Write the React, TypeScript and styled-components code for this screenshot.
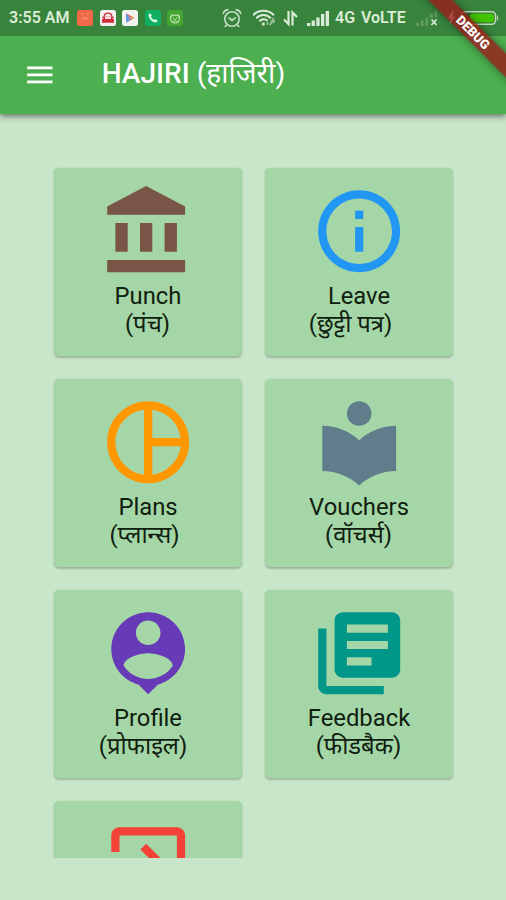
import React from "react";
import styled, { createGlobalStyle } from "styled-components";

const GlobalStyle = createGlobalStyle`
  *, *::before, *::after { box-sizing: border-box; }
  html, body { margin: 0; padding: 0; background: #c8e6c9; }
  body { font-family: Roboto, "Noto Sans", "Noto Sans Devanagari", sans-serif; }
  svg { display: block; flex: none; }
`;

const Screen = styled.div`
  position: relative;
  display: flex;
  flex-direction: column;
  width: 506px;
  height: 900px;
  overflow: hidden;
  background: #c8e6c9;
`;

const Header = styled.header`
  position: relative;
  z-index: 1;
  flex: none;
  height: 114px;
  background: #4caf50;
  box-shadow: 0 2px 5px rgba(0, 0, 0, 0.4), 0 4px 8px rgba(0, 0, 0, 0.12);
`;

const StatusBar = styled.div`
  display: flex;
  align-items: center;
  height: 36px;
  padding: 0 7px 0 9px;
  background: #39843c;
  color: #dcecd9;
  font-size: 16px;
  font-weight: 600;
  line-height: 38px;
  white-space: nowrap;
`;

const Clock = styled.span`
  width: 68px;
`;

const AppBadges = styled.div`
  display: flex;
  gap: 6.5px;
  width: 145px;
`;

const StatusSlot = styled.span<{ $w: number }>`
  flex: none;
  width: ${(p) => p.$w}px;
`;

const AppBar = styled.div`
  display: flex;
  align-items: center;
  height: 78px;
  padding-left: 23px;
`;

const Title = styled.h1`
  margin: 0 0 2px 45px;
  color: #fff;
  font-size: 28.1px;
  font-weight: 500;
  line-height: 34px;
  white-space: nowrap;
`;

const TitleHindi = styled.span`
  font-weight: 400;
`;

const RibbonCorner = styled.div`
  position: absolute;
  z-index: 2;
  top: 0;
  right: 0;
  width: 90px;
  height: 90px;
  overflow: hidden;
`;

const Ribbon = styled.div`
  position: absolute;
  top: 24px;
  left: -13px;
  width: 140px;
  height: 17px;
  transform: rotate(45deg);
  background: rgba(156, 24, 24, 0.78);
  box-shadow: 0 0 8px rgba(0, 0, 0, 0.45);
  color: #fff;
  font-size: 12.9px;
  font-weight: 900;
  line-height: 17px;
  text-align: center;
`;

const Content = styled.main`
  height: 744px;
  padding: 54px 53px 0 54px;
  overflow: hidden;
`;

const Grid = styled.div`
  display: grid;
  grid-template-columns: 188px 188px;
  grid-auto-rows: 188px;
  gap: 23px;
`;

const Card = styled.section`
  display: flex;
  flex-direction: column;
  align-items: center;
  padding-top: 14px;
  border-radius: 5px;
  background: #a5d6a7;
  box-shadow: 0 1.5px 2px rgba(0, 0, 0, 0.2), 0 0 2px rgba(0, 0, 0, 0.08);
`;

const Labels = styled.div`
  display: flex;
  flex-direction: column;
  align-items: center;
  padding-top: 1.5px;
`;

const Label = styled.div`
  height: 28px;
  color: #10200f;
  font-size: 23.8px;
  line-height: 28px;
  white-space: nowrap;
`;

const HindiLabel = styled(Label)<{ $trail: number }>`
  padding-right: ${(p) => p.$trail}px;
`;

const icons = {
  bank: "M4 10v7h3v-7H4zm6 0v7h3v-7h-3zM2 22h19v-3H2v3zm14-12v7h3v-7h-3zm-4.5-9L2 6v2h19V6l-9.5-5z",
  info: "M11 17h2v-6h-2v6zm1-15C6.48 2 2 6.48 2 12s4.48 10 10 10 10-4.48 10-10S17.52 2 12 2zm0 18c-4.41 0-8-3.59-8-8s3.59-8 8-8 8 3.59 8 8-3.59 8-8 8zM11 9h2V7h-2v2z",
  pie: "M12 2C6.48 2 2 6.48 2 12s4.48 10 10 10 10-4.48 10-10S17.52 2 12 2zm1 2.07c3.61.45 6.48 3.33 6.93 6.93H13V4.07zM4 12c0-4.06 3.07-7.44 7-7.93v15.87c-3.93-.5-7-3.88-7-7.94zm9 7.93V13h6.93c-.45 3.61-3.32 6.48-6.93 6.93z",
  reader: "M12 11.55C9.64 9.35 6.48 8 3 8v11c3.48 0 6.64 1.35 9 3.55 2.36-2.19 5.52-3.55 9-3.55V8c-3.48 0-6.64 1.35-9 3.55zM12 8c1.66 0 3-1.34 3-3s-1.34-3-3-3-3 1.34-3 3 1.34 3 3 3z",
  person: "M12 2C7.03 2 3 6.03 3 11c0 4.17 2.84 7.67 6.69 8.69L12 22l2.31-2.31C18.16 18.67 21 15.17 21 11c0-4.97-4.03-9-9-9zm0 2c1.66 0 3 1.34 3 3s-1.34 3-3 3-3-1.34-3-3 1.34-3 3-3zm0 14.3c-2.5 0-4.71-1.28-6-3.22.03-1.99 4-3.08 6-3.08 1.99 0 5.97 1.09 6 3.08-1.29 1.94-3.5 3.22-6 3.22z",
  books: "M4 6H2v14c0 1.1.9 2 2 2h14v-2H4V6zm16-4H8c-1.1 0-2 .9-2 2v12c0 1.1.9 2 2 2h12c1.1 0 2-.9 2-2V4c0-1.1-.9-2-2-2zm-1 9H9V9h10v2zm-4 4H9v-2h6v2zm4-8H9V5h10v2z",
  exit: "M10.09 15.59L11.5 17l5-5-5-5-1.41 1.41L12.67 11H3v2h9.67l-2.58 2.59zM19 3H5c-1.11 0-2 .9-2 2v4h2V5h14v14H5v-4H3v4c0 1.1.89 2 2 2h14c1.1 0 2-.9 2-2V5c0-1.1-.9-2-2-2z",
  menu: "M3 18h18v-2H3v2zm0-5h18v-2H3v2zm0-7v2h18V6H3z",
};

interface Item {
  icon: keyof typeof icons;
  color: string;
  label?: string;
  hindi?: string;
  trail?: number;
}

const items: Item[] = [
  { icon: "bank", color: "#795548", label: "Punch", hindi: "(पंच)", trail: 1 },
  { icon: "info", color: "#2196f3", label: "Leave", hindi: "(छुट्टी पत्र)", trail: 17 },
  { icon: "pie", color: "#ff9800", label: "Plans", hindi: "(प्लान्स)", trail: 7 },
  { icon: "reader", color: "#607d8b", label: "Vouchers", hindi: "(वॉचर्स)", trail: 1 },
  { icon: "person", color: "#673ab7", label: "Profile", hindi: "(प्रोफाइल)", trail: 10 },
  { icon: "books", color: "#009688", label: "Feedback", hindi: "(फीडबैक)", trail: 1 },
  { icon: "exit", color: "#f44336" },
];

const MaterialIcon = ({ d, size, color }: { d: string; size: number; color: string }) => (
  <svg width={size} height={size} viewBox="0 0 24 24" fill={color}>
    <path d={d} />
  </svg>
);

const Badges = () => (
  <AppBadges>
    <svg width="16" height="16" viewBox="0 0 16 16">
      <rect width="16" height="16" rx="2.5" fill="#f2694a" />
      <path d="M4.5 3.2l1.3 1M11.5 3.2l-1.3 1M5.5 9l2-1M10.5 9l-2-1" stroke="#fbc3a8" strokeWidth="1" fill="none" />
    </svg>
    <svg width="16" height="16" viewBox="0 0 16 16">
      <rect width="16" height="16" rx="2.5" fill="#f5eeee" />
      <path d="M4.3 6.5C4.3 2 11.7 2 11.7 6.5" stroke="#c9343c" strokeWidth="1.4" fill="none" />
      <path d="M2 6.5h12L12.5 9H14v3.8H2V9h1.5z" fill="#cf2f3b" />
      <rect x="5" y="6.5" width="6" height="2.5" fill="#f8dede" />
    </svg>
    <svg width="16" height="16" viewBox="0 0 16 16">
      <rect width="16" height="16" rx="2.5" fill="#f0f3ee" />
      <path d="M4 3v10l4-5z" fill="#5b9ce0" />
      <path d="M4 3l8.5 5H8z" fill="#e46478" />
      <path d="M4 13l8.5-5H8z" fill="#9a82b8" />
      <path d="M8 8l2-1.6L12.7 8 10 9.6z" fill="#eda455" />
    </svg>
    <svg width="16" height="16" viewBox="0 0 16 16">
      <rect width="16" height="16" rx="2.5" fill="#0fae62" />
      <path d="M3.6 4.2l1.5-1 1.7 2.4-1 1.1c.8 1.5 1.8 2.4 3.3 3.2l1.1-1 2.3 1.6-1 1.7c-3.8.9-8.3-4-7.9-8z" fill="#e8fff2" />
    </svg>
    <svg width="16" height="16" viewBox="0 0 16 16">
      <rect width="16" height="16" rx="2.5" fill="#43a52f" />
      <path d="M4 4l1 1.5M12 4l-1 1.5M3.5 7c1-2.5 8-2.5 9 0l-.8 4.5c-2 2-5.4 2-7.4 0z" stroke="#b9dfa8" strokeWidth="1.2" fill="none" />
      <path d="M6 7.5l2 2.3 2.5-2.5M6 11h4" stroke="#b9dfa8" strokeWidth="1" fill="none" />
    </svg>
  </AppBadges>
);

const AlarmIcon = () => (
  <svg width="20" height="20" viewBox="0 0 20 20" fill="none" stroke="#c9dfc8" strokeWidth="1.6" strokeLinecap="round">
    <circle cx="10" cy="11" r="7.2" />
    <path d="M1.3 5.2A6 6 0 0 1 5.8 1.6M18.7 5.2a6 6 0 0 0-4.5-3.6M7 9.8l3 2.6 3.2-2.6M4.6 17l-1.4 1.5M15.4 17l1.4 1.5" />
  </svg>
);

const WifiIcon = () => (
  <svg width="24" height="20" viewBox="0 0 24 20" fill="none" stroke="#dcebda" strokeWidth="2">
    <path d="M0 7.2C5.500 1.2 15.500 1.2 21 7.2" />
    <path d="M3.2 10.3c4-4.4 10.6-4.4 14.6 0" />
    <path d="M6.4 13.2c2.4-2.6 6-2.6 8.3-.3" />
    <circle cx="10.3" cy="16" r="1.6" fill="#dcebda" stroke="none" />
    <path d="M14.500 17v-3M17 17l3.5-7M20 15l1.7-3" stroke="#98bd96" strokeWidth="1.8" />
  </svg>
);

const TransferIcon = () => (
  <svg width="16" height="18" viewBox="0 0 16 18" fill="none" stroke="#dcebda" strokeWidth="2.2">
    <path d="M5.500 2v13L1 10.500M9.500 16.500v-13L14 8" />
  </svg>
);

const SignalIcon = () => (
  <svg width="23" height="16" viewBox="0 0 23 16" fill="#dcebda">
    <rect x="0" y="13" width="3.300" height="3" />
    <rect x="4.600" y="10.500" width="3.300" height="5.500" />
    <rect x="9.300" y="7.500" width="3.300" height="8.500" />
    <rect x="14" y="4" width="3.300" height="12" />
    <rect x="18.700" y="1" width="3.300" height="15" />
  </svg>
);

const NoSignalIcon = () => (
  <svg width="22" height="16" viewBox="0 0 22 16">
    <path d="M0 13h3v3H0zM4.600 10.500h3V16h-3zM9.300 7.500h3V16h-3zM14 4h3v4h-3zM18.700 1h2.500v6h-2.500z" fill="#5e9b5f" />
    <path d="M15.500 9.500l5 5.500M20.500 9.500l-5 5.500" stroke="#dcebda" strokeWidth="1.700" />
  </svg>
);

const BatteryIcon = () => (
  <svg width="52" height="16" viewBox="0 0 52 16">
    <path d="M5.500 1L1 8.300h3L2.500 14 8 6.500H4.800L7 2z" fill="#fff" />
    <rect x="14" y="1.700" width="34.500" height="12.600" rx="4" fill="#2c6b30" stroke="#c3dcc0" strokeWidth="1.600" />
    <rect x="23" y="3.500" width="24" height="9" rx="2.500" fill="#42c404" />
    <path d="M50 5q2.500 3 0 6z" fill="#c3dcc0" />
  </svg>
);

export default function App() {
  return (
    <Screen>
      <GlobalStyle />
      <Header>
        <StatusBar>
          <Clock>3:55 AM</Clock>
          <Badges />
          <StatusSlot $w={31}><AlarmIcon /></StatusSlot>
          <StatusSlot $w={30}><WifiIcon /></StatusSlot>
          <StatusSlot $w={24}><TransferIcon /></StatusSlot>
          <StatusSlot $w={28}><SignalIcon /></StatusSlot>
          <StatusSlot $w={26}>4G</StatusSlot>
          <StatusSlot $w={55}>VoLTE</StatusSlot>
          <StatusSlot $w={31}><NoSignalIcon /></StatusSlot>
          <BatteryIcon />
        </StatusBar>
        <AppBar>
          <MaterialIcon d={icons.menu} size={33.7} color="#fff" />
          <Title>HAJIRI <TitleHindi>(हाजिरी)</TitleHindi></Title>
        </AppBar>
      </Header>
      <RibbonCorner><Ribbon>DEBUG</Ribbon></RibbonCorner>
      <Content>
        <Grid>
          {items.map((item) => (
            <Card key={item.icon}>
              <MaterialIcon d={icons[item.icon]} size={98.4} color={item.color} />
              {item.label && (
                <Labels>
                  <Label>{item.label}</Label>
                  <HindiLabel $trail={item.trail ?? 0}>{item.hindi}</HindiLabel>
                </Labels>
              )}
            </Card>
          ))}
        </Grid>
      </Content>
    </Screen>
  );
}
